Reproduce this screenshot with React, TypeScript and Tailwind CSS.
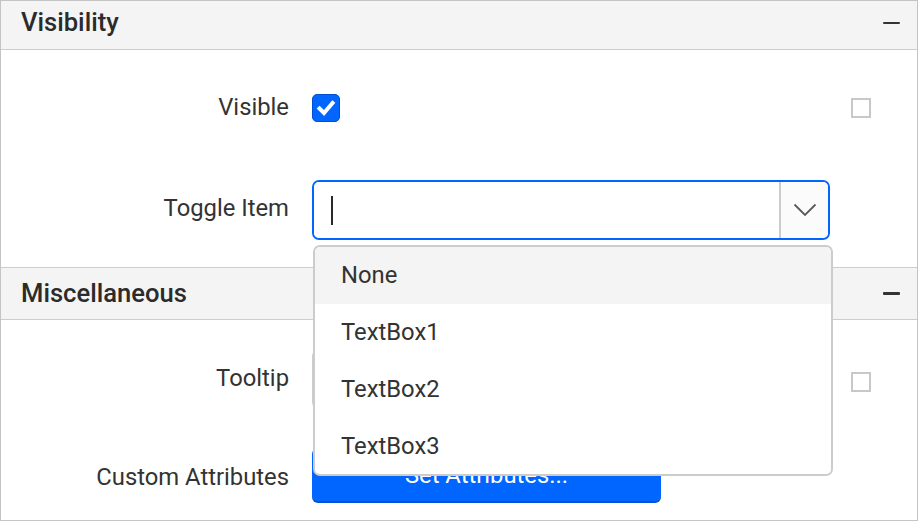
import React from 'react';

const FONT = { fontFamily: 'Roboto, "Noto Sans", sans-serif' };

function Minus() {
  return <span className="block w-[17px] h-[2.5px] bg-[#333333] rounded-[1px]" />;
}

function SectionHeader({ title, className }: { title: string; className?: string }) {
  return (
    <div className={'flex items-center justify-between bg-[#f4f4f4] border-[#cccccc] pl-[20px] pr-[17px] ' + (className || '')}>
      <span className="text-[25.6px] font-medium text-[#2b2b2b] leading-none">{title}</span>
      <Minus />
    </div>
  );
}

function Label({ text, className }: { text: string; className?: string }) {
  return (
    <div className={'w-[289px] shrink-0 text-right text-[23.8px] text-[#333333] leading-none pr-[1px] ' + (className || '-mt-[3px]')}>{text}</div>
  );
}

function EmptyBox() {
  return <span className="block w-[20px] h-[20px] border-2 border-[#c8c8c8] bg-white" />;
}

const ITEMS = ['None', 'TextBox1', 'TextBox2', 'TextBox3'];

export default function App() {
  return (
    <div style={FONT} className="relative w-[918px] h-[521px] bg-white border border-[#c4c4c4] overflow-hidden">
      <SectionHeader title="Visibility" className="h-[49px] border-b pb-[4px]" />

      <div className="flex flex-col pt-[44px] pb-[27px] border-b border-[#cccccc]">
        <div className="flex items-center h-[28px]">
          <Label text="Visible" className="-mt-[1px]" />
          <div className="ml-[22px] w-[518px] shrink-0">
            <span className="flex items-center justify-center w-[28px] h-[28px] rounded-[5px] bg-[#0066ff] border border-[#0050d0]">
              <svg width="22" height="22" viewBox="0 0 22 22">
                <polyline points="4.5,11.5 9,16 17.5,6" fill="none" stroke="white" strokeWidth="4" strokeLinecap="square" />
              </svg>
            </span>
          </div>
          <div className="ml-[21px]"><EmptyBox /></div>
        </div>

        <div className="flex items-center h-[60px] mt-[58px]">
          <Label text="Toggle Item" />
          <div className="ml-[22px] w-[518px] h-[60px] shrink-0 flex border-2 border-[#0066ff] rounded-[7px] overflow-hidden">
            <div className="flex-1 flex items-center pl-[17px] bg-white">
              <span className="block w-[2px] h-[29px] bg-[#2a2a2a]" />
            </div>
            <div className="w-[49px] flex items-center justify-center border-l-2 border-[#cccccc] bg-[#fbfbfb]">
              <svg width="24" height="14" viewBox="0 0 24 14">
                <polyline points="1.5,1.5 12,12 22.5,1.5" fill="none" stroke="#5a5a5a" strokeWidth="1.8" />
              </svg>
            </div>
          </div>
        </div>
      </div>

      <SectionHeader title="Miscellaneous" className="h-[52px] border-b" />

      <div className="flex flex-col pt-[29px]">
        <div className="flex items-center h-[60px]">
          <Label text="Tooltip" className="-mt-[1px]" />
          <div className="ml-[22px] w-[521px] h-[60px] shrink-0 border-[3px] border-[#cccccc] rounded-[7px] bg-white" />
          <div className="ml-[18px] mt-[6px]"><EmptyBox /></div>
        </div>

        <div className="flex items-center h-[55px] mt-[39px]">
          <Label text="Custom Attributes" className="mt-[5px]" />
          <button className="ml-[22px] w-[349px] h-[55px] shrink-0 rounded-[6px] bg-[#0066ff] border-b-2 border-[#0052d6] text-white text-[23.8px] leading-none pt-[3px]">
            Set Attributes...
          </button>
        </div>
      </div>

      <div className="absolute left-[312px] top-[244px] w-[520px] h-[231px] bg-white border-2 border-[#cccccc] rounded-[7px] overflow-hidden">
        {ITEMS.map((item, i) => (
          <div
            key={item}
            className={'flex items-center h-[57px] pl-[26px] text-[23.8px] text-[#333333] leading-none ' + (i === 0 ? 'bg-[#f4f4f4]' : 'bg-white')}
          >
            {item}
          </div>
        ))}
      </div>
    </div>
  );
}
